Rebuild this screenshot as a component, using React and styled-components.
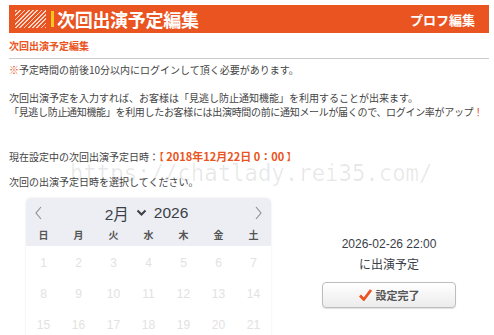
import React from 'react'
import styled, { createGlobalStyle } from 'styled-components'

const GlobalStyle = createGlobalStyle`
  body {
    margin: 0;
    background: #fff;
    font-family: "Noto Sans CJK JP", "Noto Sans", sans-serif;
    color: #444;
  }
`

const ORANGE = '#ea5420'

const Page = styled.div`
  position: relative;
  width: 494px;
  height: 335px;
  overflow: hidden;
  padding: 5px 5px 0 9px;
  box-sizing: border-box;
`

const Header = styled.div`
  display: flex;
  align-items: center;
  height: 28px;
  background: ${ORANGE};
  padding: 0 14px 0 6px;
`

const Hatch = styled.div`
  width: 31px;
  height: 18px;
  background: repeating-linear-gradient(
    -45deg,
    rgba(255, 255, 255, 0.75) 0 1.2px,
    transparent 1.2px 3px
  );
`

const Bar = styled.div`
  width: 3px;
  height: 16px;
  margin-left: 5px;
  background: #f6c61c;
`

const HeaderTitle = styled.h1`
  margin: 0 0 0 3px;
  font-size: 18px;
  font-weight: 700;
  color: #fff;
  line-height: 28px;
  letter-spacing: -0.3px;
`

const HeaderLink = styled.div`
  margin-left: auto;
  font-size: 13px;
  font-weight: 700;
  color: #fff;
`

const SubTitle = styled.h2`
  margin: 0;
  padding: 6px 0 5px;
  font-size: 10px;
  line-height: 14px;
  font-weight: 700;
  color: ${ORANGE};
  border-bottom: 1px solid #ccc;
`

const Text = styled.p`
  margin: ${p => p.$top || 0}px 0 0;
  font-size: 10px;
  line-height: ${p => p.$lh || 14}px;
  letter-spacing: ${p => (p.$tight ? '-0.32px' : '0')};
  color: #444;
  white-space: nowrap;
`

const Mark = styled.span`
  color: ${ORANGE};
`

const DateMark = styled.span`
  color: ${ORANGE};
  font-weight: 700;
  font-size: 11px;
`

const PickerRow = styled.div`
  display: flex;
  margin-top: 9px;
`

const Calendar = styled.div`
  width: 245px;
  margin-left: 17px;
  height: 150px;
  border-radius: 5px 5px 0 0;
  background: #fff;
  box-shadow: 0 0 3px rgba(0, 0, 0, 0.08);
  overflow: hidden;
`

const CalHead = styled.div`
  background: #eceef3;
  padding-bottom: 4px;
`

const MonthRow = styled.div`
  display: flex;
  align-items: center;
  justify-content: space-between;
  height: 30px;
  padding: 0 8px;
  color: #3b3f47;
`

const MonthLabel = styled.div`
  display: flex;
  align-items: center;
  gap: 7px;
  font-family: "Liberation Sans", "Noto Sans CJK JP", sans-serif;
  font-size: 15.5px;
  margin-right: 4px;
`

const Grid = styled.div`
  display: grid;
  grid-template-columns: repeat(7, 35px);
`

const WeekDay = styled.div`
  text-align: center;
  font-size: 10px;
  font-weight: 700;
  line-height: 14px;
  color: #555;
`

const Day = styled.div`
  text-align: center;
  height: 31px;
  line-height: 31px;
  font-family: "Liberation Sans", sans-serif;
  font-size: 12px;
  color: #e2e2e2;
`

const Days = styled(Grid)`
  padding-top: 2px;
`

const Side = styled.div`
  flex: 1;
  display: flex;
  flex-direction: column;
  align-items: center;
  padding: 36px 0 0 18px;
  color: #3a3e48;
`

const SideLine = styled.div`
  font-family: "Liberation Sans", "Noto Sans CJK JP", sans-serif;
  font-size: 12px;
  line-height: 21px;
`

const DoneButton = styled.button`
  display: flex;
  align-items: center;
  justify-content: center;
  gap: 4px;
  width: 134px;
  height: 26px;
  margin-top: 6px;
  border: 1px solid #bdbdbd;
  border-radius: 4px;
  background: linear-gradient(#fff, #ececec);
  box-shadow: 0 1px 1px rgba(0, 0, 0, 0.12);
  font-family: "Noto Sans CJK JP", sans-serif;
  font-size: 11px;
  font-weight: 700;
  color: #555;
  padding: 0;
`

const Watermark = styled.div`
  position: absolute;
  left: 70px;
  top: 160px;
  font-family: "DejaVu Sans Mono", "Liberation Mono", monospace;
  font-size: 22.3px;
  color: rgba(0, 0, 0, 0.09);
  pointer-events: none;
  white-space: nowrap;
`

const Chevron = ({ dir }) => (
  <svg width="10" height="14" viewBox="0 0 10 14">
    <path
      d={dir === 'left' ? 'M7 1 L2 7 L7 13' : 'M3 1 L8 7 L3 13'}
      fill="none"
      stroke="#8a8d94"
      strokeWidth="1.1"
    />
  </svg>
)

const Down = () => (
  <svg width="11" height="8" viewBox="0 0 11 8">
    <path d="M1.5 1.5 L5.5 5.5 L9.5 1.5" fill="none" stroke="#3b3f47" strokeWidth="2" />
  </svg>
)

const Check = () => (
  <svg width="13" height="12" viewBox="0 0 13 12">
    <path d="M1 6.5 L4.8 10.5 L12 1" fill="none" stroke={ORANGE} strokeWidth="2.8" strokeLinejoin="round" />
  </svg>
)

const weekdays = ['日', '月', '火', '水', '木', '金', '土']
const days = Array.from({ length: 21 }, (_, i) => i + 1)

export default function App() {
  return (
    <>
      <GlobalStyle />
      <Page>
        <Header>
          <Hatch />
          <Bar />
          <HeaderTitle>次回出演予定編集</HeaderTitle>
          <HeaderLink>プロフ編集</HeaderLink>
        </Header>
        <SubTitle>次回出演予定編集</SubTitle>
        <Text $top={4}><Mark>※</Mark>予定時間の前後10分以内にログインして頂く必要があります。</Text>
        <Text $top={14}>次回出演予定を入力すれば、お客様は「見逃し防止通知機能」を利用することが出来ます。</Text>
        <Text $tight>「見逃し防止通知機能」を利用したお客様には出演時間の前に通知メールが届くので、ログイン率がアップ<Mark>！</Mark></Text>
        <Text $top={29} $lh={16}>現在設定中の次回出演予定日時：<Mark>【</Mark> <DateMark>2018年12月22日 0：00</DateMark> <Mark>】</Mark></Text>
        <Text $top={10}>次回の出演予定日時を選択してください。</Text>
        <PickerRow>
          <Calendar>
            <CalHead>
              <MonthRow>
                <Chevron dir="left" />
                <MonthLabel>
                  <span>2月</span>
                  <Down />
                  <span>2026</span>
                </MonthLabel>
                <Chevron dir="right" />
              </MonthRow>
              <Grid>
                {weekdays.map(w => <WeekDay key={w}>{w}</WeekDay>)}
              </Grid>
            </CalHead>
            <Days>
              {days.map(d => <Day key={d}>{d}</Day>)}
            </Days>
          </Calendar>
          <Side>
            <SideLine>2026-02-26 22:00</SideLine>
            <SideLine>に出演予定</SideLine>
            <DoneButton>
              <Check />
              設定完了
            </DoneButton>
          </Side>
        </PickerRow>
        <Watermark>https://chatlady.rei35.com/</Watermark>
      </Page>
    </>
  )
}
